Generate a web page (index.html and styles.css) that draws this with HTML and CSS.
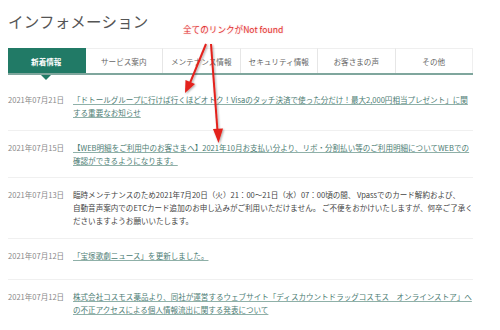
FILE: index.html
```html
<!DOCTYPE html>
<html lang="ja">
<head>
<meta charset="utf-8">
<title>インフォメーション</title>
<link rel="stylesheet" href="styles.css">
</head>
<body>
<div class="page">
  <h1 class="title">インフォメーション</h1>
  <nav class="tabs">
    <a class="tab tab-active">新着情報</a>
    <a class="tab">サービス案内</a>
    <a class="tab">メンテナンス情報</a>
    <a class="tab">セキュリティ情報</a>
    <a class="tab">お客さまの声</a>
    <a class="tab">その他</a>
  </nav>
  <ul class="news">
    <li class="item">
      <span class="date">2021年07月21日</span>
      <a class="body link">「ドトールグループに行けば行くほどオトク！Visaのタッチ決済で使った分だけ！最大2,000円相当プレゼント」に関<br>する重要なお知らせ</a>
    </li>
    <li class="item">
      <span class="date">2021年07月15日</span>
      <a class="body link">【WEB明細をご利用中のお客さまへ】2021年10月お支払い分より、リボ・分割払い等のご利用明細についてWEBでの<br>確認ができるようになります。</a>
    </li>
    <li class="item">
      <span class="date">2021年07月13日</span>
      <p class="body">臨時メンテナンスのため2021年7月20日（火）21：00～21日（水）07：00頃の間、 Vpassでのカード解約および、<br>自動音声案内でのETCカード追加のお申し込みがご利用いただけません。 ご不便をおかけいたしますが、何卒ご了承く<br>ださいますようお願いいたします。</p>
    </li>
    <li class="item item-single">
      <span class="date">2021年07月12日</span>
      <a class="body link">「宝塚歌劇ニュース」を更新しました。</a>
    </li>
    <li class="item">
      <span class="date">2021年07月12日</span>
      <a class="body link">株式会社コスモス薬品より、同社が運営するウェブサイト「ディスカウントドラッグコスモス　オンラインストア」へ<br>の不正アクセスによる個人情報流出に関する発表について</a>
    </li>
  </ul>

  <div class="note">全てのリンクがNot found</div>
  <svg class="arrows" width="500" height="330" viewBox="0 0 500 330">
    <defs>
      <filter id="sh" x="-20%" y="-20%" width="140%" height="140%">
        <feGaussianBlur in="SourceAlpha" stdDeviation="1"/>
        <feOffset dx="1" dy="1"/>
        <feComponentTransfer><feFuncA type="linear" slope="0.35"/></feComponentTransfer>
        <feMerge><feMergeNode/><feMergeNode in="SourceGraphic"/></feMerge>
      </filter>
    </defs>
    <g filter="url(#sh)" fill="#e3211c" stroke="#e3211c">
      <line x1="206" y1="44" x2="190" y2="83" stroke-width="2"/>
      <polygon points="185,93 185.5,80 195,84" stroke="none"/>
      <line x1="211" y1="44" x2="217.5" y2="131" stroke-width="2"/>
      <polygon points="218.5,143 213,129 223,128.5" stroke="none"/>
    </g>
  </svg>
</div>
</body>
</html>
```

FILE: styles.css
```css
* { box-sizing: border-box; }
html, body { margin: 0; padding: 0; background: #fff; }
body {
  font-family: "Noto Sans CJK JP", "Noto Sans", sans-serif;
  color: #444;
}
.page {
  position: relative;
  width: 500px;
  height: 330px;
  padding: 0 27px 0 8px;
  overflow: hidden;
}
.title {
  margin: 11px 0 0;
  font-size: 15.5px;
  line-height: 20px;
  font-weight: 400;
  color: #555;
  letter-spacing: 0.2px;
}
.tabs {
  display: flex;
  margin-top: 17px;
  border-bottom: 2px solid #7fa69d;
}
.tab {
  position: relative;
  flex: 1;
  height: 25px;
  display: flex;
  align-items: center;
  justify-content: center;
  font-size: 7.6px;
  color: #666;
  border-top: 1px solid #efefef;
  border-right: 1px solid #e6e6e6;
}
.tab:last-child { border-right: 1px solid #efefef; }
.tab-active {
  background: #217a66;
  color: #fff;
  font-weight: 700;
  border-color: #217a66;
}
.tab-active::after {
  content: "";
  position: absolute;
  left: 50%;
  bottom: -7px;
  margin-left: -5px;
  border-left: 5px solid transparent;
  border-right: 5px solid transparent;
  border-top: 5px solid #217a66;
}
.news {
  list-style: none;
  margin: 0;
  padding: 8px 0 0;
}
.item {
  display: flex;
  padding: 10px 0 10.5px;
  border-bottom: 1px solid #f0f0f0;
  font-size: 7.55px;
  line-height: 13px;
}
.item-single { padding-bottom: 17px; }
.item:last-child { border-bottom: none; }
.date {
  flex: 0 0 65px;
  color: #888;
  white-space: nowrap;
}
.body {
  margin: 0;
  flex: 1;
  white-space: nowrap;
}
.link {
  color: #4c7c73;
  text-decoration: underline;
  text-decoration-color: #8fb0a8;
}
p.body { color: #444; }
.note {
  position: absolute;
  left: 183px;
  top: 23px;
  font-size: 8.6px;
  line-height: 12px;
  color: #e0302f;
  text-shadow: 0 0 2px #ffd6d6, 0 0 3px #ffe4e4;
  white-space: nowrap;
}
.arrows {
  position: absolute;
  left: 0;
  top: 0;
  pointer-events: none;
}
```
